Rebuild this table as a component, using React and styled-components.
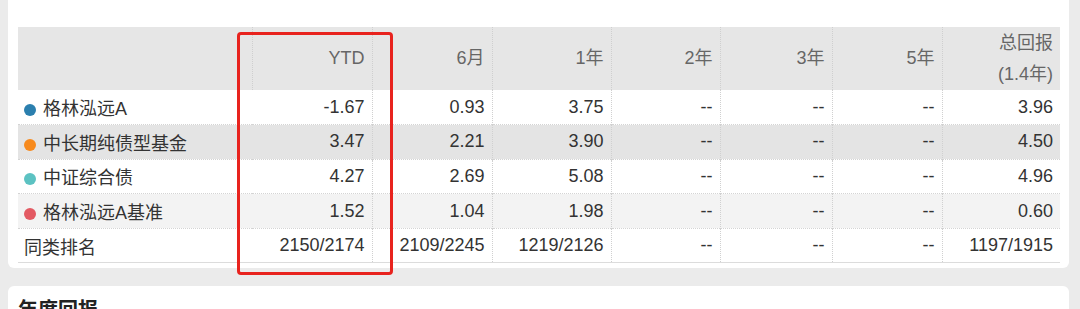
import styled, { createGlobalStyle } from "styled-components";

const GlobalStyle = createGlobalStyle`
  body {
    margin: 0;
    background: #ebebeb;
    font-family: "Liberation Sans", "Noto Sans CJK SC", sans-serif;
  }
`;

const Page = styled.div`
  width: 1080px;
  height: 309px;
  overflow: hidden;
  padding: 0 11px 0 8px;
  box-sizing: border-box;
`;

const Card = styled.div`
  position: relative;
  background: #fff;
  border-radius: 0 0 6px 6px;
  padding: 27px 9px 5px 10px;
`;

const NextCard = styled.div`
  background: #fff;
  border-radius: 6px 6px 0 0;
  margin-top: 18px;
  padding: 10px 10px 20px;
`;

const Title = styled.h2`
  margin: 0;
  font-size: 20px;
  font-weight: bold;
  color: #222;
  line-height: 28px;
`;

const Table = styled.table`
  width: 1042px;
  border-collapse: collapse;
  table-layout: fixed;
  font-size: 18px;
  color: #333;
  border-bottom: 1px solid #dcdcdc;
`;

const HeadCell = styled.th`
  height: 63px;
  padding: 0 7px 0 6px;
  background: #e6e6e6;
  color: #666;
  font-weight: normal;
  text-align: right;
  line-height: 31px;
  vertical-align: middle;
  & + & {
    border-left: 1px dotted #cfcfcf;
  }
`;

const Row = styled.tr`
  height: 34.6px;
  background: ${(p) => p.$bg || "#fff"};
  border-bottom: 1px dotted #d4d4d4;
`;

const Cell = styled.td`
  padding: 0 7px 0 6px;
  text-align: right;
  white-space: nowrap;
  & + & {
    border-left: 1px dotted #d0d0d0;
  }
`;

const NameCell = styled.td`
  padding: 0 6px;
  text-align: left;
  white-space: nowrap;
`;

const Dot = styled.span`
  display: inline-block;
  width: 12px;
  height: 12px;
  border-radius: 50%;
  background: ${(p) => p.$color};
  margin-right: 7px;
  vertical-align: -1px;
`;

const Highlight = styled.div`
  position: absolute;
  left: 229px;
  top: 32px;
  width: 156px;
  height: 243px;
  box-sizing: border-box;
  border: 3px solid #e8231e;
  border-radius: 4px;
  pointer-events: none;
`;

const widths = [234, 120, 120, 119, 109, 112, 110, 118];

const rows = [
  { name: "格林泓远A", color: "#2b7fae", bg: "#fff", v: ["-1.67", "0.93", "3.75", "--", "--", "--", "3.96"] },
  { name: "中长期纯债型基金", color: "#f78a1d", bg: "#e4e4e4", v: ["3.47", "2.21", "3.90", "--", "--", "--", "4.50"] },
  { name: "中证综合债", color: "#5cc2c2", bg: "#fff", v: ["4.27", "2.69", "5.08", "--", "--", "--", "4.96"] },
  { name: "格林泓远A基准", color: "#e35a63", bg: "#f3f3f3", v: ["1.52", "1.04", "1.98", "--", "--", "--", "0.60"] },
  { name: "同类排名", bg: "#fff", v: ["2150/2174", "2109/2245", "1219/2126", "--", "--", "--", "1197/1915"] },
];

const App = () => {
  return (
    <Page>
      <GlobalStyle />
      <Card>
        <Table>
          <colgroup>
            {widths.map((w, i) => (
              <col key={i} style={{ width: w }} />
            ))}
          </colgroup>
          <thead>
            <tr>
              <HeadCell />
              <HeadCell>YTD</HeadCell>
              <HeadCell>6月</HeadCell>
              <HeadCell>1年</HeadCell>
              <HeadCell>2年</HeadCell>
              <HeadCell>3年</HeadCell>
              <HeadCell>5年</HeadCell>
              <HeadCell>
                总回报
                <br />
                (1.4年)
              </HeadCell>
            </tr>
          </thead>
          <tbody>
            {rows.map((r) => (
              <Row key={r.name} $bg={r.bg}>
                <NameCell>
                  {r.color && <Dot $color={r.color} />}
                  {r.name}
                </NameCell>
                {r.v.map((x, i) => (
                  <Cell key={i}>{x}</Cell>
                ))}
              </Row>
            ))}
          </tbody>
        </Table>
        <Highlight />
      </Card>
      <NextCard>
        <Title>年度回报</Title>
      </NextCard>
    </Page>
  );
};

export default App;
